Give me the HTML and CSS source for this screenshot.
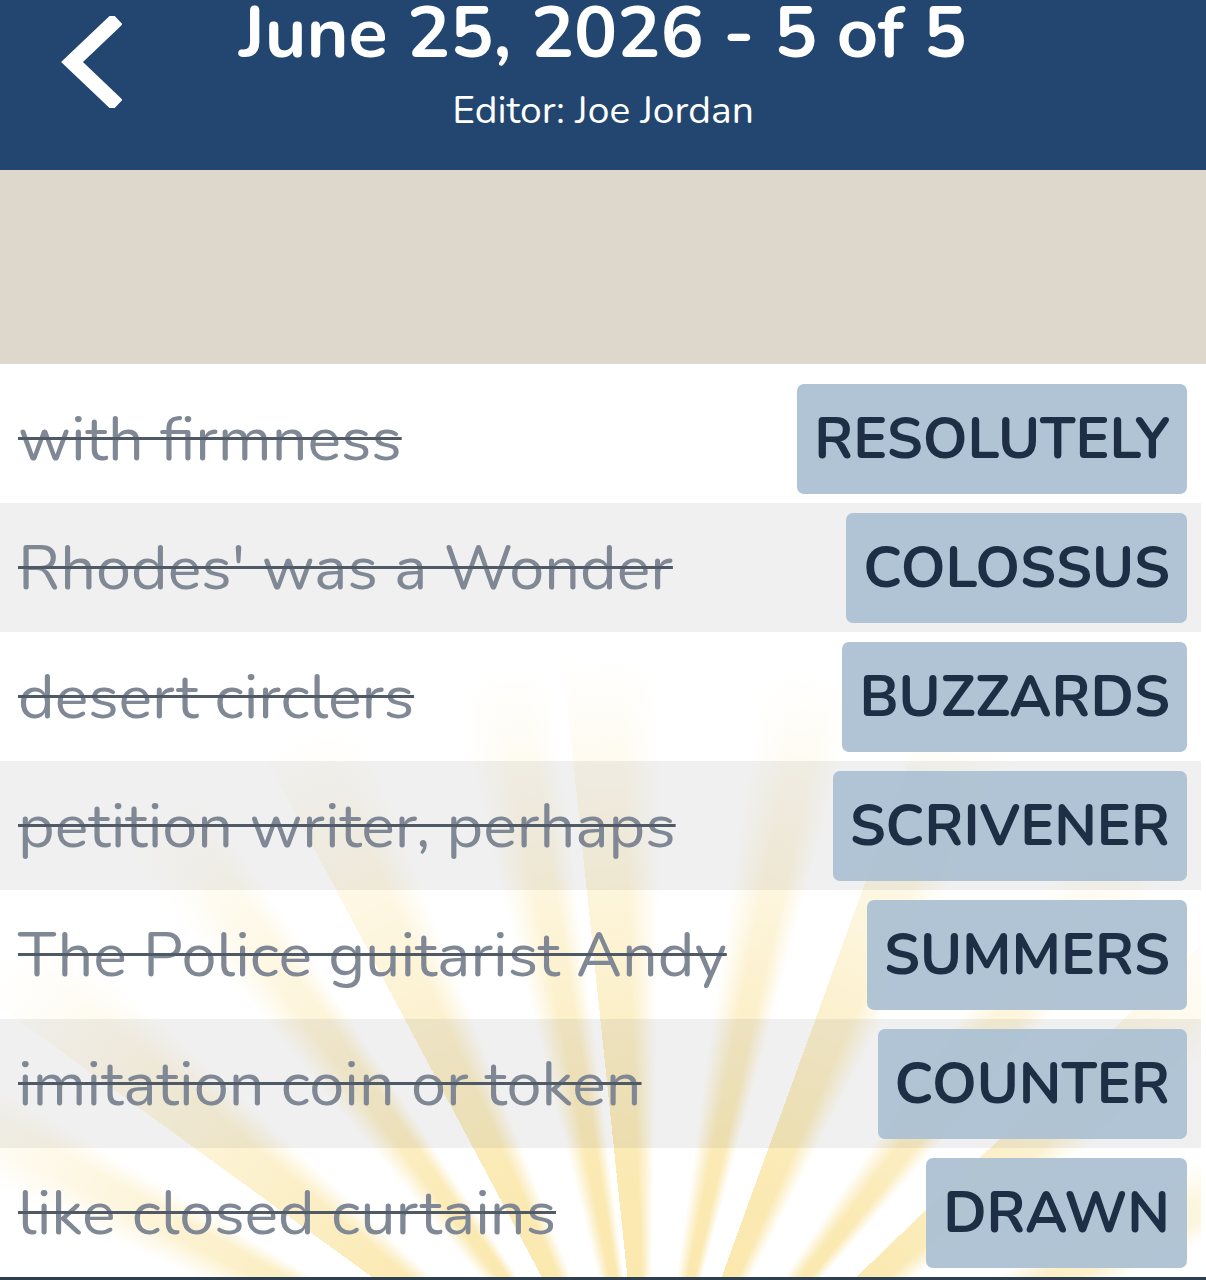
FILE: index.html
```html
<!DOCTYPE html>
<html lang="en">

<head>
    <meta charset="UTF-8">
    <meta name="viewport" content="width=device-width, initial-scale=1.0">
    <title>June 25, 2026 - 5 of 5</title>
    <link rel="stylesheet" href="styles.css">
</head>

<body>
    <header class="top-bar">
        <button class="back-btn" aria-label="Back">
            <svg width="62" height="92" viewBox="0 0 62 92">
                <path d="M52 8 L12 46 L52 84" fill="none" stroke="#ffffff" stroke-width="15" stroke-linecap="square" stroke-linejoin="miter"/>
            </svg>
        </button>
        <div class="title-block">
            <h1>June 25, 2026 - 5 of 5</h1>
            <p class="editor">Editor: Joe Jordan</p>
        </div>
        <div></div>
    </header>

    <div class="banner"></div>

    <ul class="clue-list">
        <li class="clue-row">
            <span class="clue">with firmness</span>
            <span class="answer">RESOLUTELY</span>
        </li>
        <li class="clue-row">
            <span class="clue">Rhodes' was a Wonder</span>
            <span class="answer">COLOSSUS</span>
        </li>
        <li class="clue-row">
            <span class="clue">desert circlers</span>
            <span class="answer">BUZZARDS</span>
        </li>
        <li class="clue-row">
            <span class="clue">petition writer, perhaps</span>
            <span class="answer">SCRIVENER</span>
        </li>
        <li class="clue-row">
            <span class="clue">The Police guitarist Andy</span>
            <span class="answer">SUMMERS</span>
        </li>
        <li class="clue-row">
            <span class="clue">imitation coin or token</span>
            <span class="answer">COUNTER</span>
        </li>
        <li class="clue-row">
            <span class="clue">like closed curtains</span>
            <span class="answer">DRAWN</span>
        </li>
    </ul>

    <div class="bottom-bar"></div>
</body>

</html>
```

FILE: styles.css
```css
* {
    box-sizing: border-box;
}

body {
    margin: 0;
    background-color: #ffffff;
    font-family: "Nunito", "Lato", "Noto Sans", sans-serif;
    overflow: hidden;
}

.top-bar {
    display: grid;
    grid-template-columns: 1fr auto 1fr;
    align-items: start;
    height: 170px;
    background-color: #22466f;
    color: #ffffff;
}

.back-btn {
    justify-self: start;
    margin: 16px 0 0 60px;
    padding: 0;
    background: none;
    border: none;
    cursor: pointer;
}

.title-block {
    text-align: center;
}

.title-block h1 {
    margin: -6px 0 0;
    font-size: 72px;
    font-weight: 700;
    line-height: 1.1;
}

.editor {
    margin: 15px 0 0;
    font-size: 39px;
    line-height: 1.2;
}

.banner {
    height: 194px;
    background-color: #ddd7cc;
}

/* pale sun rays behind the solved clues */
.clue-list {
    list-style: none;
    margin: 0 5px 0 0;
    padding: 10px 0 0;
    background:
        radial-gradient(circle at 54% 122%, rgba(255, 255, 255, 0) 0, rgba(255, 255, 255, 0.15) 320px, #ffffff 820px),
        repeating-conic-gradient(from -6deg at 54% 122%, #fae6a6 0deg 4deg, #ffffff 7deg 14deg, #fae6a6 17deg 19deg, #ffffff 21deg 26deg);
}

.clue-row {
    display: flex;
    align-items: center;
    justify-content: space-between;
    height: 129px;
    padding: 0 14px 0 18px;
}

.clue-row:nth-child(even) {
    background-color: rgba(120, 120, 120, 0.11);
}

.clue {
    font-size: 63px;
    color: #7f8894;
    text-decoration: line-through;
    text-decoration-color: #4f5a66;
    text-decoration-thickness: 3px;
    white-space: nowrap;
}

.answer {
    display: flex;
    align-items: center;
    height: 110px;
    padding: 0 17px;
    border-radius: 7px;
    background-color: rgba(172, 193, 211, 0.95);
    color: #1d2e45;
    font-size: 57px;
    font-weight: 700;
}

.bottom-bar {
    height: 4px;
    background-color: #2c3e50;
}
```
